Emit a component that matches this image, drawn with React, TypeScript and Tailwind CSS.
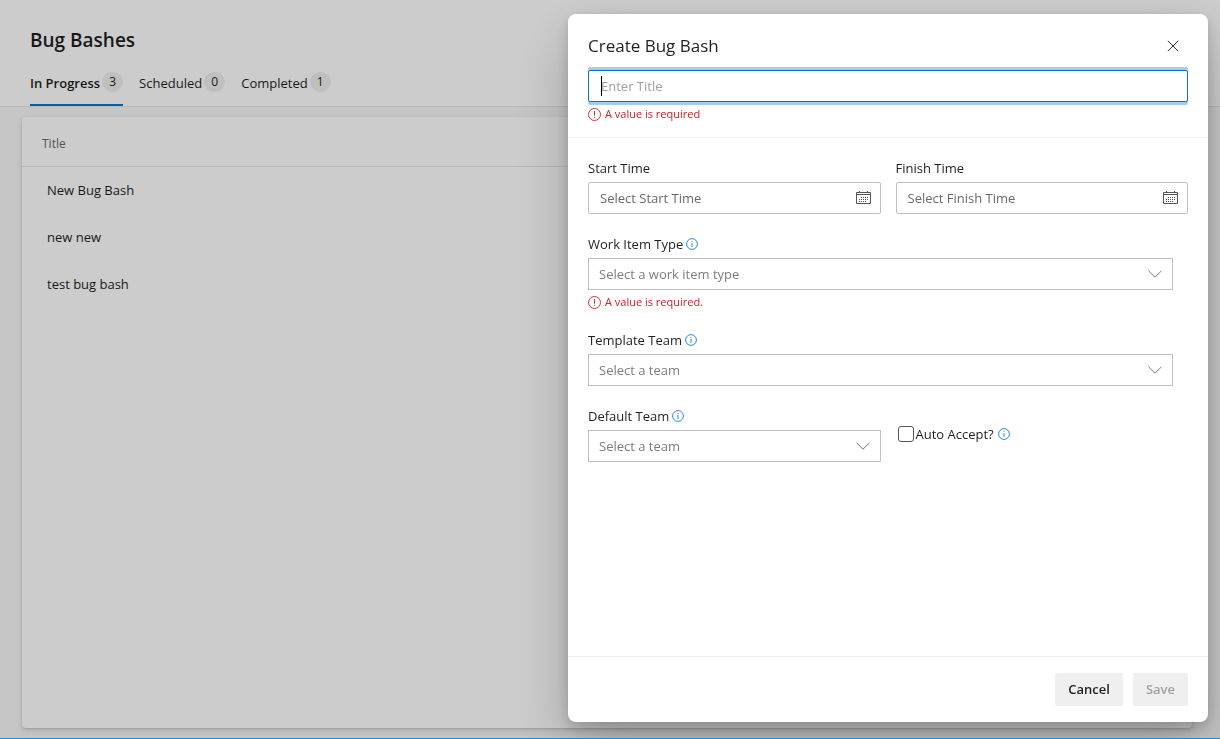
import { useState } from "react"
import type { ReactNode } from "react"

// ── Types ──────────────────────────────────────────────────────────────────
interface Tab {
  label: string
  count: number
}

const TABS: Tab[] = [
  { label: "In Progress", count: 3 },
  { label: "Scheduled", count: 0 },
  { label: "Completed", count: 1 },
]

const BUG_BASHES = ["New Bug Bash", "new new", "test bug bash"]

// ── Icons ──────────────────────────────────────────────────────────────────
function CloseIcon() {
  return (
    <svg width="12" height="12" viewBox="0 0 12 12" fill="none" stroke="#333" aria-hidden="true">
      <path d="M0.8 0.8L11.2 11.2M11.2 0.8L0.8 11.2" />
    </svg>
  )
}

function ErrorIcon() {
  return (
    <svg width="13" height="13" viewBox="0 0 13 13" fill="none" stroke="#d13438" aria-hidden="true">
      <circle cx="6.5" cy="6.5" r="6" />
      <path d="M6.5 3V7.8M6.5 8.8V9.8" />
    </svg>
  )
}

function InfoIcon() {
  return (
    <svg width="12" height="12" viewBox="0 0 12 12" fill="none" stroke="#2b88d8" aria-hidden="true">
      <circle cx="6" cy="6" r="5.4" />
      <path d="M6 5V9M6 3V4" />
    </svg>
  )
}

function CalendarIcon() {
  return (
    <svg width="15" height="14" viewBox="0 0 15 14" fill="none" stroke="#555" aria-hidden="true">
      <path d="M0.5 1.5H14.5V12.5H0.5Z" />
      <path d="M0.5 3.5H14.5" />
      <path d="M3.5 0V2M11.5 0V2" />
      <path d="M5 6.5H13M3 8.5H13M3 10.5H11" strokeDasharray="1 1" />
    </svg>
  )
}

function ChevronIcon() {
  return (
    <svg width="14" height="8" viewBox="0 0 14 8" fill="none" stroke="#777" aria-hidden="true">
      <path d="M0.5 0.8L7 7.2L13.5 0.8" />
    </svg>
  )
}

// ── Form pieces ────────────────────────────────────────────────────────────
function ErrorText({ children }: { children: ReactNode }) {
  return (
    <p className="mt-1 flex items-center gap-1 text-[11px] leading-4 text-[#cd2027]">
      <ErrorIcon />
      {children}
    </p>
  )
}

function DateField({ id, label, placeholder }: { id: string; label: string; placeholder: string }) {
  return (
    <div className="min-w-0 flex-1">
      <label htmlFor={id} className="mb-1 block leading-5">{label}</label>
      <div className="flex h-8 items-center rounded-xs border border-[#c0c0c0] pr-[9px] pl-[11px]">
        <input
          id={id}
          type="text"
          placeholder={placeholder}
          className="min-w-0 flex-1 pt-[2px] outline-none placeholder:text-[#6a6a6a]"
        />
        <button type="button" aria-label={`Open ${label} calendar`}>
          <CalendarIcon />
        </button>
      </div>
    </div>
  )
}

interface SelectFieldProps {
  id: string
  label: string
  placeholder: string
  error?: string
}

function SelectField({ id, label, placeholder, error }: SelectFieldProps) {
  return (
    <div className="min-w-0 flex-1">
      <div className="mb-1 flex items-center gap-[3px] leading-5">
        <label htmlFor={id}>{label}</label>
        <InfoIcon />
      </div>
      <div className="grid items-center">
        <select
          id={id}
          defaultValue=""
          className="col-start-1 row-start-1 h-8 w-full appearance-none border border-[#c0c0c0] bg-white pt-px pr-8 pl-[10px] text-[#7d7d7d] outline-none"
        >
          <option value="">{placeholder}</option>
        </select>
        <span className="pointer-events-none col-start-1 row-start-1 mr-[11px] justify-self-end">
          <ChevronIcon />
        </span>
      </div>
      {error && <ErrorText>{error}</ErrorText>}
    </div>
  )
}

// ── Create dialog ──────────────────────────────────────────────────────────
function CreateDialog() {
  const [title, setTitle] = useState("")

  return (
    <form
      role="dialog"
      aria-label="Create Bug Bash"
      className="flex w-full max-w-[640px] flex-col rounded-lg bg-white shadow-[0_26px_58px_rgba(0,0,0,0.22),0_5px_14px_rgba(0,0,0,0.18)]"
    >
      <header className="border-b border-[#eeeeee] px-5 pt-5 pb-[15px]">
        <div className="flex items-center justify-between">
          <h2 className="text-[17px] leading-6">Create Bug Bash</h2>
          <button type="button" aria-label="Close" className="flex h-6 w-[30px] items-center justify-center">
            <CloseIcon />
          </button>
        </div>
        <div className="relative mt-3">
          <input
            type="text"
            aria-label="Title"
            placeholder="Enter Title"
            value={title}
            onChange={(e) => setTitle(e.target.value)}
            className="block h-8 w-full rounded-xs border border-[#106ebe] px-3 shadow-[0_3px_0_#a6cdf0,0_-3px_0_#a6cdf0] outline-none placeholder:text-[#a0a0a0]"
          />
          {title === "" && <span className="absolute top-[6px] left-[13px] h-5 w-px bg-black" />}
        </div>
        {title === "" && <ErrorText>A value is required</ErrorText>}
      </header>

      <div className="flex flex-1 flex-col gap-5 overflow-y-auto p-5">
        <div className="flex gap-[15px]">
          <DateField id="start" label="Start Time" placeholder="Select Start Time" />
          <DateField id="finish" label="Finish Time" placeholder="Select Finish Time" />
        </div>
        <div className="flex pr-[15px]">
          <SelectField
            id="type"
            label="Work Item Type"
            placeholder="Select a work item type"
            error="A value is required."
          />
        </div>
        <div className="flex pr-[15px]">
          <SelectField id="template" label="Template Team" placeholder="Select a team" />
        </div>
        <div className="flex gap-[15px]">
          <SelectField id="team" label="Default Team" placeholder="Select a team" />
          <div className="flex-1 self-center">
            <div className="flex items-center gap-[2px] pl-[2px]">
              <input
                id="accept"
                type="checkbox"
                className="h-4 w-4 appearance-none rounded-[3px] border border-[#555555] bg-white checked:bg-[#0078d4]"
              />
              <label htmlFor="accept" className="mr-[2px] leading-5">Auto Accept?</label>
              <InfoIcon />
            </div>
          </div>
        </div>
      </div>

      <footer className="flex justify-end gap-[10px] border-t border-[#eeeeee] px-5 py-4 font-semibold">
        <button type="button" className="h-[33px] rounded-xs bg-[#efefef] px-[13px]">Cancel</button>
        <button type="submit" disabled className="h-[33px] rounded-xs bg-[#efefef] px-[13px] text-[#a0a0a0]">
          Save
        </button>
      </footer>
    </form>
  )
}

// ── Page ───────────────────────────────────────────────────────────────────
export default function App() {
  const [active, setActive] = useState("In Progress")

  return (
    <div className="flex min-h-screen flex-col border-b border-[#1e88d8] bg-[#f8f8f8] font-['Open_Sans','Noto_Sans',sans-serif] text-[13px] text-[#1f1f1f]">
      <header className="border-b border-[#e6e6e6] bg-white px-[30px] pt-6">
        <h1 className="text-[19px] leading-8 font-semibold">Bug Bashes</h1>
        <nav className="mt-4 flex gap-4">
          {TABS.map((tab) => (
            <button
              key={tab.label}
              type="button"
              onClick={() => setActive(tab.label)}
              className={`flex items-start border-b-2 pb-[11px] ${
                active === tab.label ? "border-[#0078d4] font-semibold" : "border-transparent"
              }`}
            >
              <span className="mt-px leading-5">{tab.label}</span>
              <span className="ml-[2px] min-w-[21px] rounded-full bg-[#efefef] text-center text-[12px] leading-5 font-normal">
                {tab.count}
              </span>
            </button>
          ))}
        </nav>
      </header>

      <main className="flex flex-1 flex-col pt-[10px] pr-7 pb-[10px] pl-[22px]">
        <div className="flex-1 rounded-sm bg-white shadow-[0_3px_7px_rgba(0,0,0,0.13),0_1px_2px_rgba(0,0,0,0.11)]">
          <table className="w-full text-left">
            <thead>
              <tr className="h-[49px] border-b border-[#e6e6e6]">
                <th className="pt-[6px] pl-5 text-[12px] font-normal text-[#6a6a6a]">Title</th>
              </tr>
            </thead>
            <tbody>
              {BUG_BASHES.map((name) => (
                <tr key={name} className="h-[47px]">
                  <td className="pt-[2px] pl-[25px]">{name}</td>
                </tr>
              ))}
            </tbody>
          </table>
        </div>
      </main>

      <div className="fixed inset-x-0 top-0 bottom-px flex justify-end overflow-hidden bg-black/20 pt-[14px] pr-3 pb-4">
        <CreateDialog />
      </div>
    </div>
  )
}
